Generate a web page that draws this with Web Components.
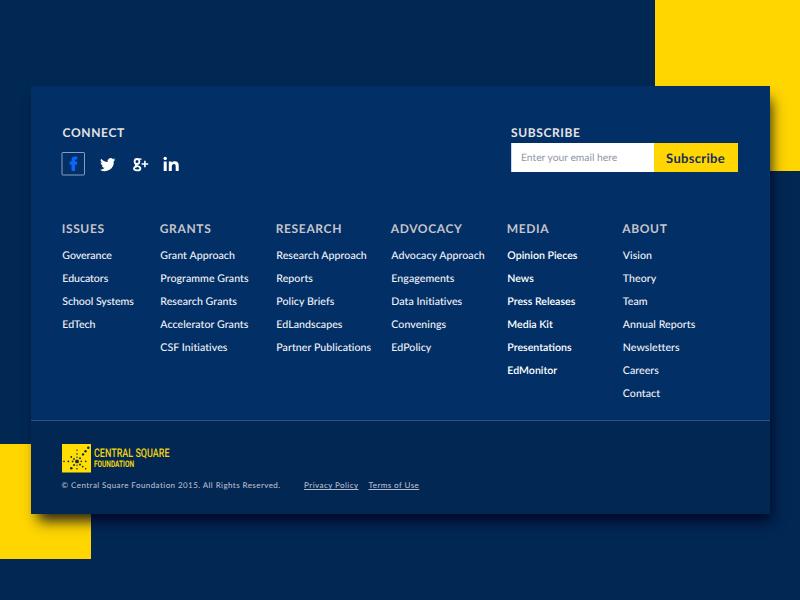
<!DOCTYPE html>
<html lang="en">
<head>
<meta charset="utf-8">
<title>Central Square Foundation</title>
<style>
html,body{margin:0;width:800px;height:600px;overflow:hidden;background:#012753;font-family:Lato,"Liberation Sans",sans-serif;text-rendering:geometricPrecision}
</style>
</head>
<body>
<csf-stage>
  <csf-footer>
    <csf-connect slot="top"></csf-connect>
    <csf-subscribe slot="top"></csf-subscribe>
    <csf-column slot="nav" tight heading="ISSUES" links="Goverance|Educators|School Systems|EdTech"></csf-column>
    <csf-column slot="nav" heading="GRANTS" links="Grant Approach|Programme Grants|Research Grants|Accelerator Grants|CSF Initiatives"></csf-column>
    <csf-column slot="nav" heading="RESEARCH" links="Research Approach|Reports|Policy Briefs|EdLandscapes|Partner Publications"></csf-column>
    <csf-column slot="nav" heading="ADVOCACY" links="Advocacy Approach|Engagements|Data Initiatives|Convenings|EdPolicy"></csf-column>
    <csf-column slot="nav" strong heading="MEDIA" links="Opinion Pieces|News|Press Releases|Media Kit|Presentations|EdMonitor"></csf-column>
    <csf-column slot="nav" heading="ABOUT" links="Vision|Theory|Team|Annual Reports|Newsletters|Careers|Contact"></csf-column>
    <csf-legal slot="bottom"></csf-legal>
  </csf-footer>
</csf-stage>
<script>
const define = (name, html, init) => customElements.define(name, class extends HTMLElement {
  constructor() {
    super();
    this.attachShadow({mode: 'open'}).innerHTML = html;
  }
  connectedCallback() { if (init) init(this, this.shadowRoot); }
});

define('csf-stage', `
<style>
:host{display:block;position:relative;width:800px;height:600px;box-sizing:border-box;padding:86px 30px 0 31px;overflow:hidden}
.block{position:absolute;background:#ffd600}
.tr{right:0;top:0;width:145px;height:171px}
.bl{left:0;top:444px;width:91px;height:115px}
</style>
<div class="block tr"></div><div class="block bl"></div><slot></slot>`);

define('csf-footer', `
<style>
:host{display:flex;flex-direction:column;position:relative;height:428px;background:#022f66;box-shadow:4px 10px 13px -3px rgba(0,0,30,.85)}
.top{display:flex;justify-content:space-between;height:135px;box-sizing:border-box;padding:39px 32px 0 30px}
.nav{display:grid;grid-template-columns:98px 116px 115px 116px 115.5px auto;padding-left:30.7px;height:199px}
.bottom{flex:1;box-sizing:border-box;border-top:1px solid #2f5080;background:#022753;padding:23px 0 0 31px}
</style>
<div class="top"><slot name="top"></slot></div>
<nav class="nav"><slot name="nav"></slot></nav>
<div class="bottom"><slot name="bottom"></slot></div>`);

define('csf-connect', `
<style>
:host{display:block}
h2{margin:0 0 0 1.5px;font-size:12px;line-height:15px;font-weight:700;letter-spacing:.65px;color:#e6e4e4}
.icons{display:flex;margin-top:12px;height:24px}
svg{display:block}
</style>
<h2>CONNECT</h2>
<div class="icons">
<svg width="125" height="24" viewBox="0 0 125 24" fill="#fff">
<rect x="1" y=".5" width="22.500" height="22.5" rx=".6" fill="none" stroke="#8b9dba"/>
<path fill="#0866ff" d="M10.500 19V12.700H8.600V9.500h1.900V8.200c0-2.500 1.300-3.600 3.600-3.600h2.200v3h-1.300c-.8 0-1 .4-1 1v.9h2.300l-.3 3.200h-2V19z"/>
<path transform="translate(-2.300 -.4) scale(1.03)" d="M55 7.700c-.5.250-1.100.420-1.750.500.630-.380 1.100-.980 1.330-1.680-.6.350-1.240.600-1.940.740a3.050 3.050 0 0 0-5.200 2.780c-2.540-.130-4.780-1.340-6.290-3.190-.83 1.430-.36 3.140.95 4.080-.5-.020-.970-.150-1.380-.380 0 1.500 1.030 2.800 2.450 3.080-.450.120-.92.140-1.380.050.390 1.220 1.520 2.100 2.850 2.120A6.160 6.160 0 0 1 40.100 17.600a8.650 8.650 0 0 0 13.300-8.180c.6-.430 1.140-1.030 1.600-1.720z"/>
<g fill="none" stroke="#fff" stroke-width="1.800"><ellipse cx="76" cy="9.500" rx="2.400" ry="2.500"/><path d="M77.600 7.100h3" stroke-width="1.300"/><path d="M75.200 12c-1.200 1-.4 1.700 1.200 2.100 2.300.5 3 1.200 3 2.300 0 1.300-1.200 2-3.300 2-2 0-3.100-.7-3.100-1.900 0-1.300 1.300-2 3-2.200"/></g>
<path d="M80.600 11.200h2.500V8.700h1.600v2.500h2.500v1.600h-2.500v2.500h-1.600v-2.500h-2.500z"/>
<g transform="translate(-.3 .2)"><path d="M103 9.300h3v9.400h-3zM108.100 9.300h2.900v1.300c.5-.9 1.500-1.500 3-1.500 3 0 4 1.700 4 4.500v5.100h-3v-4.600c0-1.400-.3-2.400-1.700-2.400-1.500 0-2.200 1-2.200 2.500v4.500h-3z"/><circle cx="104.500" cy="6.200" r="1.700"/></g>
</svg>
</div>`);

define('csf-subscribe', `
<style>
:host{display:block;width:227px}
h2{margin:0;font-size:12px;line-height:15px;font-weight:700;letter-spacing:.6px;color:#e6e4e4}
.form{display:flex;margin-top:3px;height:29px;box-sizing:border-box}
.field{flex:1;box-sizing:border-box;background:#fff;border:1px solid #cdd6e6;border-width:0 0 0 1px;padding-left:9px;font-size:10.300px;line-height:30px;color:#8f97a9}
.btn{width:84px;box-sizing:border-box;padding-right:1px;background:#ffd600;color:#142b5c;font-weight:700;font-size:13px;line-height:30px;text-align:center;letter-spacing:.3px}
</style>
<h2>SUBSCRIBE</h2>
<div class="form"><div class="field"><span>Enter your email here</span></div><div class="btn"><span>Subscribe</span></div></div>`);

define('csf-column', `
<style>
:host{display:block;white-space:nowrap}
h3{margin:0 0 9px;font-size:12px;line-height:15px;font-weight:700;letter-spacing:.65px;color:#c6c5c9}
ul{margin:0;padding:0;list-style:none}
li{height:23.05px;line-height:23px;font-size:10.6px;font-weight:500;letter-spacing:.06px;color:#f1f3f8;padding-left:.6px}
:host([tight]) li{letter-spacing:-.05px}
:host([strong]) li{font-weight:600;letter-spacing:0;color:#fff}
</style>
<h3></h3><ul></ul>`, (el, root) => {
  root.querySelector('h3').textContent = el.getAttribute('heading');
  root.querySelector('ul').replaceChildren(...el.getAttribute('links').split('|').map(t => {
    const li = document.createElement('li');
    const a = document.createElement('span');
    a.textContent = t; li.append(a);
    return li;
  }));
});

define('csf-legal', `
<style>
:host{display:block;color:#b4bccb;font-size:8px;line-height:12px;letter-spacing:.42px;font-weight:500}
svg{display:block;overflow:visible}
.row{display:flex;margin-top:6px;margin-left:-.4px;white-space:nowrap}
.copy{width:242.500px}
.link{text-decoration:underline;text-underline-offset:1px;margin-right:10px}
</style>
<svg width="110" height="29" viewBox="0 0 110 29">
<rect width="29" height="28.500" fill="#ffde00"/>
<g fill="#10284f">
<circle cx="15" cy="17.400" r="1.900"/>
<circle cx="15" cy="6.300" r=".7"/><circle cx="15" cy="10" r=".8"/><circle cx="15" cy="13.300" r=".7"/>
<circle cx="26.300" cy="3.700" r="1.300"/><circle cx="23.500" cy="7.300" r="1.200"/><circle cx="21" cy="10.400" r="1.200"/><circle cx="18" cy="14.200" r="1"/>
<circle cx="2" cy="17.400" r=".8"/><circle cx="6.300" cy="17.400" r=".9"/><circle cx="10.600" cy="17.400" r=".9"/>
<circle cx="19.300" cy="17.400" r=".8"/><circle cx="23.700" cy="17.400" r=".8"/>
<circle cx="12" cy="21" r="1"/><circle cx="9.300" cy="24.300" r="1.300"/><circle cx="15" cy="21.200" r=".7"/><circle cx="15" cy="24.700" r=".8"/>
<circle cx="18" cy="20.600" r="1"/><circle cx="20.700" cy="22.600" r=".9"/><circle cx="23.700" cy="24.700" r=".8"/>
<circle cx="12" cy="15" r=".9"/><circle cx="9.300" cy="13" r=".9"/>
</g>
<g fill="#f2d40d" font-family="Roboto,sans-serif" font-weight="500" letter-spacing="0">
<text x="32" y="13.300" font-size="12" textLength="75.500" lengthAdjust="spacingAndGlyphs">CENTRAL SQUARE</text>
<text x="32" y="22.800" font-size="9" font-weight="700" textLength="40" lengthAdjust="spacingAndGlyphs">FOUNDATION</text>
</g>
</svg>
<div class="row"><span class="copy">© Central Square Foundation 2015. All Rights Reserved.</span><span class="link">Privacy Policy</span><span class="link">Terms of Use</span></div>`);
</script>
</body>
</html>
